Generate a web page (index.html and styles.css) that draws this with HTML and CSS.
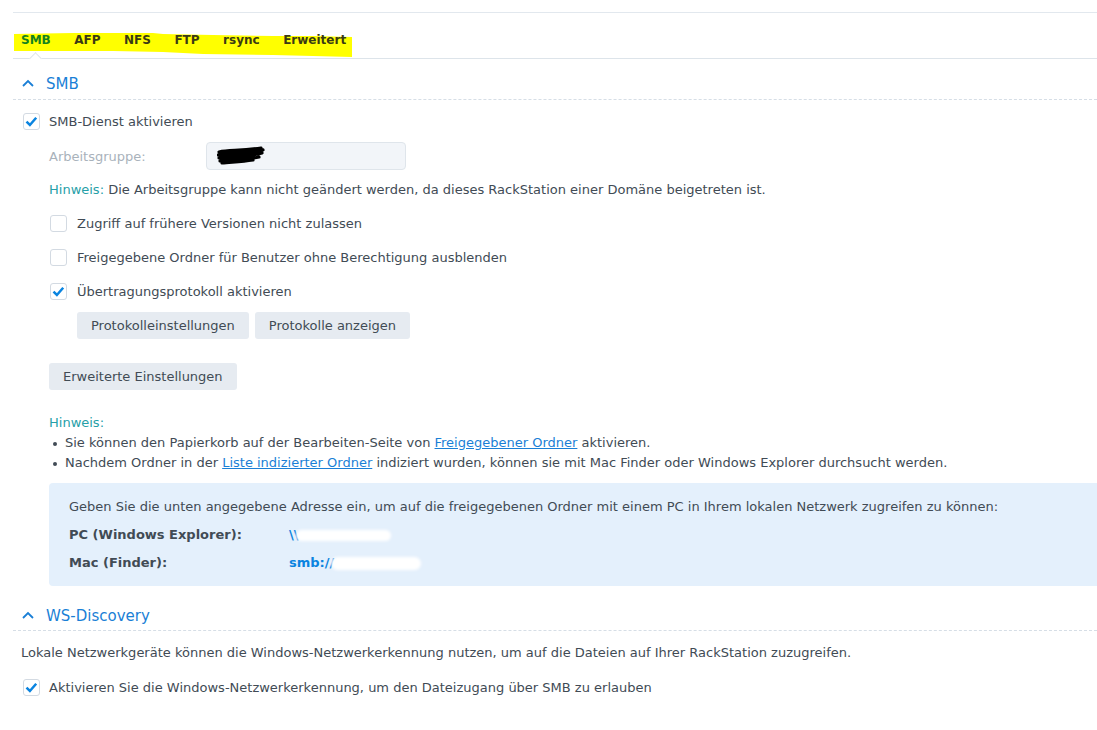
FILE: index.html
```html
<!DOCTYPE html>
<html lang="de">
<head>
<meta charset="utf-8">
<title>SMB</title>
<link rel="stylesheet" href="styles.css">
</head>
<body>
<div class="page">
  <div class="topline"></div>
  <div class="tabbar">
    <svg class="marker" width="345" height="46" viewBox="0 0 345 46"><polygon points="1,21 60,20 140,20 150,21 200,22 260,23 300,23 339,24 339,44 300,43 260,42 190,41 150,39 100,38 1,38" fill="#ffff00"/></svg>
    <div class="tabs">
      <span class="tab active">SMB</span>
      <span class="tab">AFP</span>
      <span class="tab">NFS</span>
      <span class="tab">FTP</span>
      <span class="tab">rsync</span>
      <span class="tab">Erweitert</span>
    </div>
    <span class="notch"></span>
  </div>

  <div class="sec-head first">
    <svg class="chev" width="12" height="8" viewBox="0 0 12 8"><polyline points="1,7 6,2 11,7" fill="none" stroke="#1a7fd6" stroke-width="1.8"/></svg>
    <span>SMB</span>
  </div>

  <div class="sec-body">
    <div class="row">
      <span class="cb checked"><svg width="17" height="17" viewBox="0 0 17 17"><polyline points="3.5,8.6 6.9,12 13.2,4.8" fill="none" stroke="#0a84e0" stroke-width="2.5"/></svg></span>
      <span class="lbl">SMB-Dienst aktivieren</span>
    </div>
    <div class="row indent1">
      <span class="field-label">Arbeitsgruppe:</span>
      <span class="input">
        <svg width="48" height="20" viewBox="0 0 48 20"><path d="M2,6 C12,4 24,5 44,2 M1,9 C14,7 30,8 46,4 M2,12 C16,10 30,11 45,7 M3,15 C15,13 28,14 42,11 M5,17 C14,16 24,16 36,14" fill="none" stroke="#000" stroke-width="3.2" stroke-linecap="round"/></svg>
      </span>
    </div>
    <div class="row indent1 hint-row">
      <span class="hint">Hinweis:</span>&nbsp;Die Arbeitsgruppe kann nicht geändert werden, da dieses RackStation einer Domäne beigetreten ist.
    </div>
    <div class="row indent2">
      <span class="cb"></span>
      <span class="lbl">Zugriff auf frühere Versionen nicht zulassen</span>
    </div>
    <div class="row indent2">
      <span class="cb"></span>
      <span class="lbl">Freigegebene Ordner für Benutzer ohne Berechtigung ausblenden</span>
    </div>
    <div class="row indent2">
      <span class="cb checked"><svg width="17" height="17" viewBox="0 0 17 17"><polyline points="3.5,8.6 6.9,12 13.2,4.8" fill="none" stroke="#0a84e0" stroke-width="2.5"/></svg></span>
      <span class="lbl">Übertragungsprotokoll aktivieren</span>
    </div>
    <div class="row btn-row">
      <button class="btn">Protokolleinstellungen</button>
      <button class="btn">Protokolle anzeigen</button>
    </div>
    <div class="adv">
      <button class="btn">Erweiterte Einstellungen</button>
    </div>
    <div class="notes">
      <div class="hint">Hinweis:</div>
      <ul>
        <li>Sie können den Papierkorb auf der Bearbeiten-Seite von <a href="#">Freigegebener Ordner</a> aktivieren.</li>
        <li>Nachdem Ordner in der <a href="#">Liste indizierter Ordner</a> indiziert wurden, können sie mit Mac Finder oder Windows Explorer durchsucht werden.</li>
      </ul>
    </div>
    <div class="infobox">
      <div class="info-line">Geben Sie die unten angegebene Adresse ein, um auf die freigegebenen Ordner mit einem PC in Ihrem lokalen Netzwerk zugreifen zu können:</div>
      <div class="info-grid">
        <span class="k">PC (Windows Explorer):</span>
        <span class="v">\\<span class="blur b1"></span></span>
        <span class="k">Mac (Finder):</span>
        <span class="v">smb://<span class="blur b2"></span></span>
      </div>
    </div>
  </div>

  <div class="sec-head second">
    <svg class="chev" width="12" height="8" viewBox="0 0 12 8"><polyline points="1,7 6,2 11,7" fill="none" stroke="#1a7fd6" stroke-width="1.8"/></svg>
    <span>WS-Discovery</span>
  </div>
  <div class="ws-body">
    <div class="row ws-text">Lokale Netzwerkgeräte können die Windows-Netzwerkerkennung nutzen, um auf die Dateien auf Ihrer RackStation zuzugreifen.</div>
    <div class="row ws-cb">
      <span class="cb checked"><svg width="17" height="17" viewBox="0 0 17 17"><polyline points="3.5,8.6 6.9,12 13.2,4.8" fill="none" stroke="#0a84e0" stroke-width="2.5"/></svg></span>
      <span class="lbl">Aktivieren Sie die Windows-Netzwerkerkennung, um den Dateizugang über SMB zu erlauben</span>
    </div>
  </div>
</div>
</body>
</html>
```

FILE: styles.css
```css
* { box-sizing: border-box; }
html, body { margin: 0; padding: 0; background: #fff; }
body {
  font-family: "DejaVu Sans", Verdana, sans-serif;
  font-size: 13px;
  color: #414b55;
  overflow: hidden;
}
.page { padding-left: 13px; }

.topline {
  height: 13px;
  border-bottom: 1px solid #e2e8ee;
}

.tabbar {
  position: relative;
  padding-top: 19px;
  border-bottom: 1px solid #dde4ea;
  height: 46px;
}
.marker {
  position: absolute;
  left: 0;
  top: 0;
  display: block;
}
.tabs {
  position: relative;
  display: flex;
  align-items: center;
  height: 16px;
  padding-left: 8px;
}
.tab {
  font-size: 12px;
  font-weight: bold;
  color: #3a3a14;
  margin-right: 23.5px;
  line-height: 16px;
}
.tab.active { color: #15821f; }
.notch {
  position: absolute;
  left: 18px;
  bottom: -5px;
  width: 9px;
  height: 9px;
  background: #fff;
  border-top: 1px solid #dde4ea;
  border-left: 1px solid #dde4ea;
  transform: rotate(45deg);
}

.sec-head {
  display: flex;
  align-items: center;
  gap: 12px;
  padding-left: 9px;
  font-size: 15px;
  color: #1a7fd6;
  line-height: 18px;
  border-bottom: 1px dashed #d6dee6;
}
.sec-head.first { padding-top: 16px; padding-bottom: 6px; }
.sec-head.second { padding-top: 21px; padding-bottom: 5px; }
.chev { display: block; margin-top: -2px; }

.sec-body { padding-left: 10px; }

.row {
  display: flex;
  align-items: center;
  height: 34px;
}
.sec-body > .row:first-child { margin-top: 4px; height: 35px; }

.cb {
  width: 17px;
  height: 17px;
  border: 1px solid #d3dae2;
  border-radius: 3px;
  background: #fff;
  display: flex;
  align-items: center;
  justify-content: center;
  flex: none;
  position: relative;
}
.cb svg { display: block; position: absolute; left: -1px; top: -1px; }
.lbl { margin-left: 9px; }

.indent1 { padding-left: 26px; }
.indent2 { padding-left: 27px; }
.indent2 .lbl { margin-left: 10px; }

.field-label { width: 157px; color: #a9b2bb; }
.input {
  width: 200px;
  height: 28px;
  background: #f2f5f9;
  border: 1px solid #dfe5eb;
  border-radius: 4px;
  display: flex;
  align-items: center;
  padding-left: 10px;
}
.input svg { display: block; }

.hint { color: #26a0a8; }
.hint-row { height: 33px; }

.btn {
  font-family: inherit;
  font-size: 13px;
  color: #414b55;
  background: #e6ebf1;
  border: none;
  border-radius: 3px;
  height: 27px;
  padding: 0 14px;
  cursor: pointer;
}
.btn-row { padding-left: 54px; gap: 6px; }
.adv { padding-left: 26px; margin-top: 21px; }

.notes { padding-left: 26px; margin-top: 23px; line-height: 20px; }
.notes ul { margin: 0; padding: 0 0 0 16px; list-style: none; }
.notes li { position: relative; }
.notes li::before {
  content: "";
  position: absolute;
  left: -12px;
  top: 9px;
  width: 4px;
  height: 4px;
  border-radius: 50%;
  background: #414b55;
}
.notes a { color: #1a7fd6; }

.infobox {
  margin: 10px 0 0 26px;
  background: #e4f0fc;
  border-radius: 4px 0 0 4px;
  padding: 14px 20px 13px 20px;
  line-height: 20px;
}
.info-grid {
  display: grid;
  grid-template-columns: 220px 1fr;
  row-gap: 8px;
  margin-top: 8px;
}
.k { font-weight: bold; }
.v { font-weight: bold; color: #0a84e0; position: relative; }
.blur {
  display: inline-block;
  vertical-align: middle;
  background: #fff;
  border-radius: 8px;
  filter: blur(1.5px);
}
.b1 { width: 95px; height: 11px; margin-left: -3px; }
.b2 { width: 90px; height: 13px; margin-left: -3px; }

.ws-body { padding-left: 8px; }
.ws-text { height: 35px; margin-top: 4px; }
.ws-cb { padding-left: 2px; }
.ws-cb .lbl { margin-left: 9px; }
```
